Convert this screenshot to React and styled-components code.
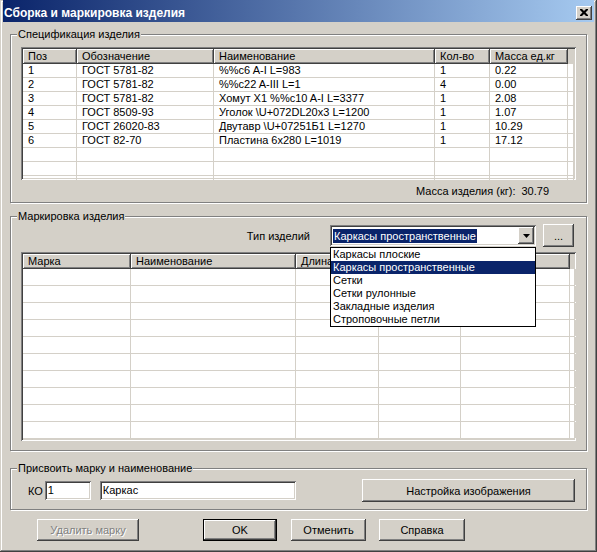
import React from 'react';
import styled, { createGlobalStyle } from 'styled-components';

const GlobalStyle = createGlobalStyle`
  body {
    margin: 0;
    background: #d4d0c8;
    font-family: "Liberation Sans", Arial, sans-serif;
    font-size: 11px;
    color: #000;
  }
  * { box-sizing: border-box; }
`;

const raised = `
  box-shadow: inset -1px -1px #404040, inset 1px 1px #ffffff, inset -2px -2px #808080, inset 2px 2px #d4d0c8;
`;
const sunken = `
  box-shadow: inset 1px 1px #808080, inset -1px -1px #ffffff, inset 2px 2px #404040, inset -2px -2px #d4d0c8;
`;

const Window = styled.div`
  width: 597px;
  height: 552px;
  padding: 0 3px 3px;
  background: #d4d0c8;
  display: flex;
  flex-direction: column;
  box-shadow: inset -1px -1px #404040, inset 1px 1px #d4d0c8, inset -2px -2px #808080, inset 2px 2px #ffffff;
`;

const Caption = styled.div`
  height: 22px;
  padding: 3px 2px 0 1px;
  display: flex;
  align-items: center;
  background: linear-gradient(to right, #0a246a, #a6caf0);
`;

const CaptionTitle = styled.div`
  flex: 1;
  color: #fff;
  font-weight: bold;
  font-size: 12px;
  white-space: nowrap;
`;

const CloseButton = styled.div`
  width: 16px;
  height: 14px;
  background: #d4d0c8;
  display: flex;
  align-items: center;
  justify-content: center;
  ${raised}
`;

const Body = styled.div`
  padding: 6px 7px 0;
  display: flex;
  flex-direction: column;
`;

const GroupBox = styled.fieldset`
  margin: ${p => p.$mt || 0}px 0 0;
  padding: ${p => p.$pad};
  min-inline-size: 0;
  border: 1px solid #808080;
  box-shadow: inset 1px 1px #ffffff, 1px 1px #ffffff;
`;

const Legend = styled.legend`
  margin-left: -4px;
  padding: 0 1px;
  line-height: 13px;
  background: #d4d0c8;
`;

const ListView = styled.div`
  height: ${p => p.$h}px;
  padding: 2px;
  background: #fff;
  overflow: hidden;
  ${sunken}
`;

const HeaderRow = styled.div`
  display: flex;
  height: 15px;
  background: #d4d0c8;
`;

const HeaderCell = styled.div`
  flex: none;
  width: ${p => p.$w}px;
  padding-left: 5px;
  line-height: 15px;
  white-space: nowrap;
  overflow: hidden;
  box-shadow: inset -1px -1px #404040, inset 1px 1px #ffffff, inset -2px -2px #808080;
`;

const Row = styled.div`
  display: flex;
  height: ${p => p.$h}px;
  border-bottom: 1px solid #d4d0c8;
`;

const Cell = styled.div`
  flex: ${p => (p.$w ? 'none' : 1)};
  width: ${p => (p.$w ? `${p.$w}px` : 'auto')};
  padding-left: 5px;
  border-right: 1px solid #d4d0c8;
  line-height: ${p => p.$h - 1}px;
  white-space: nowrap;
  overflow: hidden;
`;

const MassRow = styled.div`
  height: 22px;
  padding-right: 27px;
  display: flex;
  align-items: center;
  justify-content: flex-end;
  gap: 6px;
`;

const Toolbar = styled.div`
  height: 23px;
  margin-bottom: 5px;
  padding-right: 2px;
  display: flex;
  align-items: center;
  justify-content: flex-end;
`;

const Label = styled.span`
  margin: 0 ${p => p.$mr || 0}px 0 ${p => p.$ml || 0}px;
  white-space: nowrap;
`;

const Combo = styled.div`
  position: relative;
  width: 206px;
  height: 21px;
  padding: 2px;
  background: #fff;
  display: flex;
  align-items: center;
  ${sunken}
`;

const Selected = styled.span`
  margin-left: 1px;
  padding: 0 1px;
  line-height: 14px;
  background: #0a246a;
  color: #fff;
`;

const ArrowButton = styled.div`
  margin-left: auto;
  width: 16px;
  height: 17px;
  background: #d4d0c8;
  display: flex;
  align-items: center;
  justify-content: center;
  ${raised}
`;

const DropList = styled.div`
  position: absolute;
  top: 22px;
  left: 0;
  width: 206px;
  border: 1px solid #000;
  background: #fff;
  z-index: 10;
`;

const DropItem = styled.div`
  line-height: 13px;
  padding-left: 2px;
  background: ${p => (p.$active ? '#0a246a' : 'transparent')};
  color: ${p => (p.$active ? '#fff' : '#000')};
`;

const Button = styled.div`
  flex: none;
  width: ${p => p.$w}px;
  height: ${p => p.$h || 22}px;
  margin-left: ${p => p.$ml || 0}px;
  background: #d4d0c8;
  display: flex;
  align-items: center;
  justify-content: center;
  white-space: nowrap;
  color: ${p => (p.$disabled ? '#808080' : '#000')};
  text-shadow: ${p => (p.$disabled ? '1px 1px #ffffff' : 'none')};
  border: ${p => (p.$default ? '1px solid #000' : 'none')};
  ${raised}
`;

const PushRight = styled(Button)`
  margin-left: auto;
`;

const FieldRow = styled.div`
  height: 23px;
  display: flex;
  align-items: center;
`;

const TextBox = styled.div`
  flex: none;
  width: ${p => p.$w}px;
  height: 19px;
  margin-left: ${p => p.$ml || 0}px;
  padding-left: 3px;
  line-height: 19px;
  background: #fff;
  ${sunken}
`;

const ButtonBar = styled.div`
  margin-top: 9px;
  padding-left: 27px;
  display: flex;
`;

const specColumns = [
  { title: 'Поз', w: 54 },
  { title: 'Обозначение', w: 137 },
  { title: 'Наименование', w: 221 },
  { title: 'Кол-во', w: 55 },
  { title: 'Масса ед.кг', w: 78 },
];

const specRows = [
  ['1', 'ГОСТ 5781-82', '%%c6 A-I L=983', '1', '0.22'],
  ['2', 'ГОСТ 5781-82', '%%c22 A-III L=1', '4', '0.00'],
  ['3', 'ГОСТ 5781-82', 'Хомут X1 %%c10 A-I L=3377', '1', '2.08'],
  ['4', 'ГОСТ 8509-93', 'Уголок \\U+072DL20x3 L=1200', '1', '1.07'],
  ['5', 'ГОСТ 26020-83', 'Двутавр \\U+07251Б1 L=1270', '1', '10.29'],
  ['6', 'ГОСТ 82-70', 'Пластина 6x280 L=1019', '1', '17.12'],
  ['', '', '', '', ''],
  ['', '', '', '', ''],
  ['', '', '', '', ''],
];

// the last two headings sit under the open drop-down list
const markColumns = [
  { title: 'Марка', w: 108 },
  { title: 'Наименование', w: 165 },
  { title: 'Длина', w: 83 },
  { title: '', w: 82 },
  { title: '', w: 109 },
];

const productTypes = [
  'Каркасы плоские',
  'Каркасы пространственные',
  'Сетки',
  'Сетки рулонные',
  'Закладные изделия',
  'Строповочные петли',
];

const Table = ({ columns, rows, rowHeight, height }) => (
  <ListView $h={height}>
    <HeaderRow>
      {columns.map((c, i) => (
        <HeaderCell key={i} $w={c.w}>{c.title}</HeaderCell>
      ))}
    </HeaderRow>
    {rows.map((r, i) => (
      <Row key={i} $h={rowHeight}>
        {columns.map((c, j) => (
          <Cell key={j} $w={c.w} $h={rowHeight}>{r[j]}</Cell>
        ))}
        <Cell $h={rowHeight} />
      </Row>
    ))}
  </ListView>
);

const App = () => {
  const emptyRows = Array.from({ length: 10 }, () => ['', '', '', '', '']);

  return (
    <>
      <GlobalStyle />
      <Window>
        <Caption>
          <CaptionTitle>Сборка и маркировка изделия</CaptionTitle>
          <CloseButton>
            <svg width="8" height="7" viewBox="0 0 8 7">
              <path d="M0 0h2l2 2 2-2h2v1L5.5 3.5 8 6v1H6L4 5 2 7H0V6l2.5-2.5L0 1z" fill="#000" />
            </svg>
          </CloseButton>
        </Caption>

        <Body>
          <GroupBox $pad="6px 10px 0 10px">
            <Legend>Спецификация изделия</Legend>
            <Table columns={specColumns} rows={specRows} rowHeight={14} height={133} />
            <MassRow>
              <span>Масса изделия (кг):</span>
              <span>30.79</span>
            </MassRow>
          </GroupBox>

          <GroupBox $mt={7} $pad="1px 10px 9px 10px">
            <Legend>Маркировка изделия</Legend>
            <Toolbar>
              <Label $mr={20}>Тип изделий</Label>
              <Combo>
                <Selected>Каркасы пространственные</Selected>
                <ArrowButton>
                  <svg width="7" height="4" viewBox="0 0 7 4">
                    <polygon points="0,0 7,0 3.5,4" fill="#000" />
                  </svg>
                </ArrowButton>
                <DropList>
                  {productTypes.map(t => (
                    <DropItem key={t} $active={t === 'Каркасы пространственные'}>{t}</DropItem>
                  ))}
                </DropList>
              </Combo>
              <Button $w={31} $h={23} $ml={7}>...</Button>
            </Toolbar>
            <Table columns={markColumns} rows={emptyRows} rowHeight={17} height={189} />
          </GroupBox>

          <GroupBox $mt={11} $pad="4px 11px 7px 10px">
            <Legend>Присвоить марку и наименование</Legend>
            <FieldRow>
              <Label $ml={7} $mr={2}>КО</Label>
              <TextBox $w={46}>1</TextBox>
              <TextBox $w={196} $ml={9}>Каркас</TextBox>
              <PushRight $w={213} $h={23}>Настройка изображения</PushRight>
            </FieldRow>
          </GroupBox>

          <ButtonBar>
            <Button $w={102} $disabled>Удалить марку</Button>
            <Button $w={74} $ml={64} $default>OK</Button>
            <Button $w={75} $ml={14}>Отменить</Button>
            <Button $w={86} $ml={13}>Справка</Button>
          </ButtonBar>
        </Body>
      </Window>
    </>
  );
};

export default App;
